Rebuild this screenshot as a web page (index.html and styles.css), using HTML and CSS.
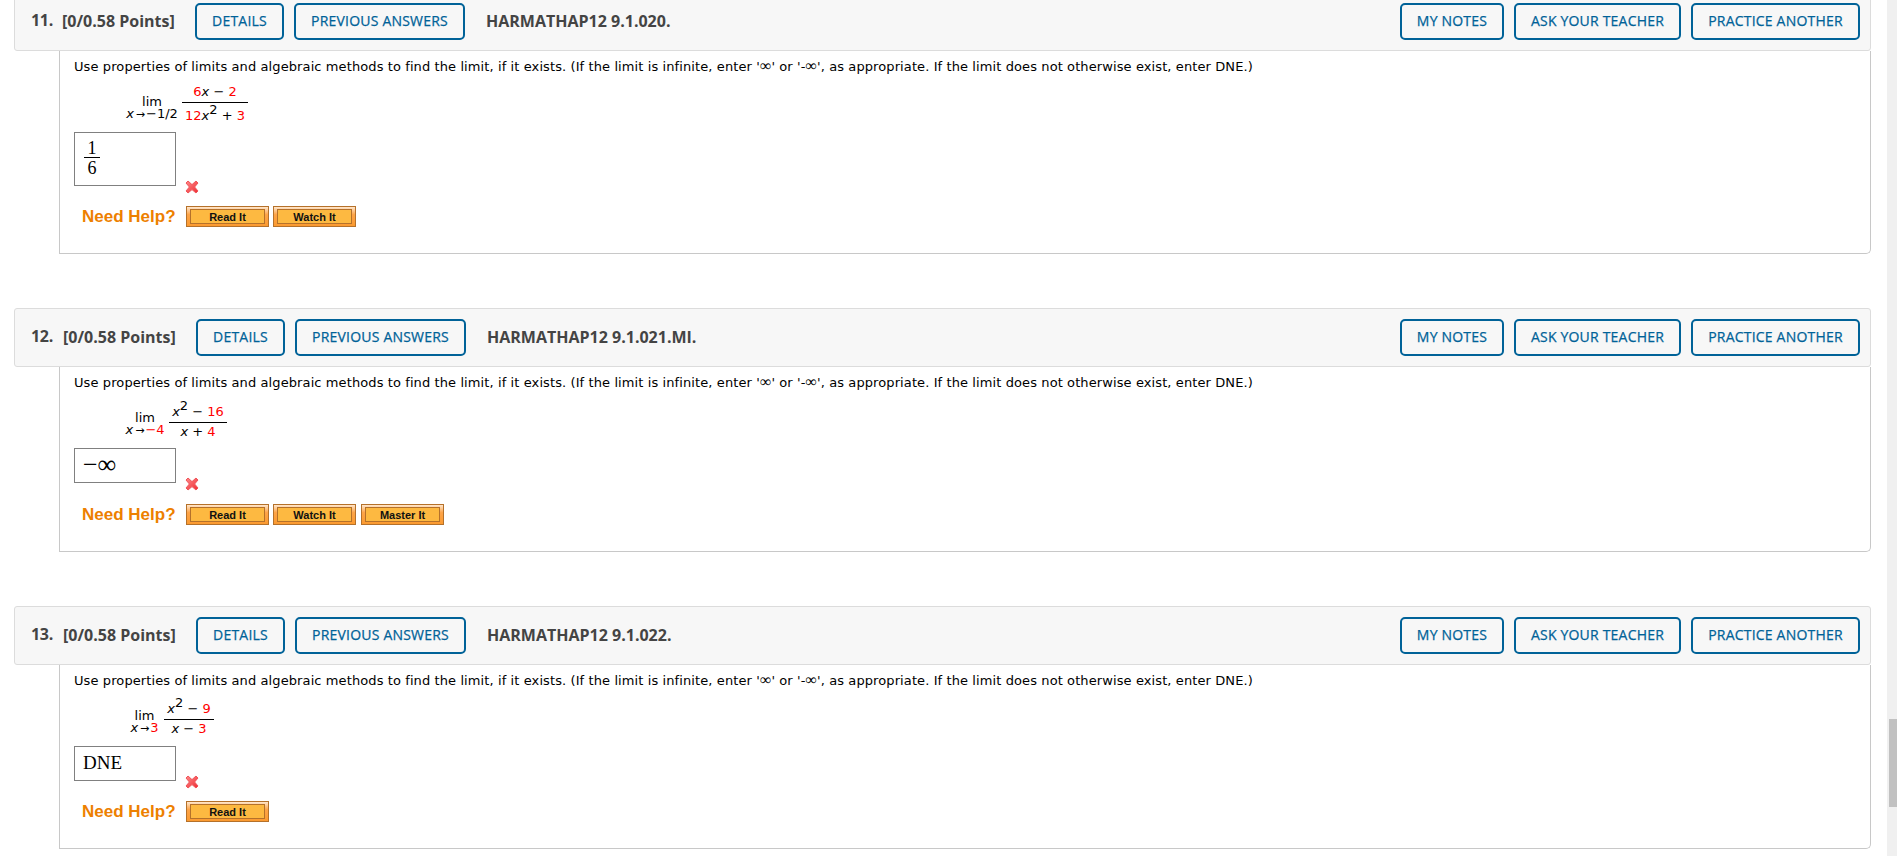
FILE: index.html
```
<!DOCTYPE html>
<html lang="en">
<head>
    <meta charset="UTF-8">
    <meta name="viewport" content="width=device-width, initial-scale=1.0">
    <title>Assignment</title>
    <link rel="stylesheet" href="styles.css">
</head>
<body>
    <svg width="0" height="0" class="defs">
        <defs>
            <linearGradient id="red" x1="0" y1="0" x2="1" y2="1">
                <stop offset="0" stop-color="#ff8a8a"/>
                <stop offset="1" stop-color="#ee2c33"/>
            </linearGradient>
            <symbol id="wrong" viewBox="0 0 14 14">
                <path d="M3 1 L7 4.6 L11 1 L13 3 L9.6 7 L13 11 L11 13 L7 9.6 L3 13 L1 11 L4.4 7 L1 3 Z" fill="url(#red)" stroke="#f0555a" stroke-width="1" stroke-linejoin="round"/>
            </symbol>
        </defs>
    </svg>
    <div class="page">
        <div class="question q11">
            <div class="header">
                <span class="num">11.</span>
                <span class="points">[0/0.58 Points]</span>
                <button class="btn details">DETAILS</button>
                <button class="btn previous">PREVIOUS ANSWERS</button>
                <span class="name">HARMATHAP12 9.1.020.</span>
                <button class="btn notes">MY NOTES</button>
                <button class="btn ask">ASK YOUR TEACHER</button>
                <button class="btn practice">PRACTICE ANOTHER</button>
            </div>
            <div class="content">
                <p class="prompt">Use properties of limits and algebraic methods to find the limit, if it exists. (If the limit is infinite, enter '<span class="inf">∞</span>' or '-<span class="inf">∞</span>', as appropriate. If the limit does not otherwise exist, enter DNE.)</p>
                <div class="limit">
                    <div class="lim"><span>lim</span><span class="to"><i>x</i><span class="arrow">→</span>−1/2</span></div>
                    <div class="fraction">
                        <span class="top"><b>6</b><i>x</i> − <b>2</b></span>
                        <span class="bottom"><b>12</b><i>x</i><sup>2</sup> + <b>3</b></span>
                    </div>
                </div>
                <div class="answer">
                    <div class="box tall"><span class="frac"><span>1</span><span>6</span></span></div>
                    <svg class="mark" width="14" height="14"><use href="#wrong"/></svg>
                </div>
                <div class="help">
                    <span class="need">Need Help?</span>
                    <button class="help-btn"><span>Read It</span></button>
                    <button class="help-btn"><span>Watch It</span></button>
                </div>
            </div>
        </div>

        <div class="question q12">
            <div class="header">
                <span class="num">12.</span>
                <span class="points">[0/0.58 Points]</span>
                <button class="btn details">DETAILS</button>
                <button class="btn previous">PREVIOUS ANSWERS</button>
                <span class="name">HARMATHAP12 9.1.021.MI.</span>
                <button class="btn notes">MY NOTES</button>
                <button class="btn ask">ASK YOUR TEACHER</button>
                <button class="btn practice">PRACTICE ANOTHER</button>
            </div>
            <div class="content">
                <p class="prompt">Use properties of limits and algebraic methods to find the limit, if it exists. (If the limit is infinite, enter '<span class="inf">∞</span>' or '-<span class="inf">∞</span>', as appropriate. If the limit does not otherwise exist, enter DNE.)</p>
                <div class="limit">
                    <div class="lim"><span>lim</span><span class="to"><i>x</i><span class="arrow">→</span><b>−4</b></span></div>
                    <div class="fraction">
                        <span class="top"><i>x</i><sup>2</sup> − <b>16</b></span>
                        <span class="bottom"><i>x</i> + <b>4</b></span>
                    </div>
                </div>
                <div class="answer">
                    <div class="box infinity">−∞</div>
                    <svg class="mark" width="14" height="14"><use href="#wrong"/></svg>
                </div>
                <div class="help">
                    <span class="need">Need Help?</span>
                    <button class="help-btn"><span>Read It</span></button>
                    <button class="help-btn"><span>Watch It</span></button>
                    <button class="help-btn last"><span>Master It</span></button>
                </div>
            </div>
        </div>

        <div class="question q13">
            <div class="header">
                <span class="num">13.</span>
                <span class="points">[0/0.58 Points]</span>
                <button class="btn details">DETAILS</button>
                <button class="btn previous">PREVIOUS ANSWERS</button>
                <span class="name">HARMATHAP12 9.1.022.</span>
                <button class="btn notes">MY NOTES</button>
                <button class="btn ask">ASK YOUR TEACHER</button>
                <button class="btn practice">PRACTICE ANOTHER</button>
            </div>
            <div class="content">
                <p class="prompt">Use properties of limits and algebraic methods to find the limit, if it exists. (If the limit is infinite, enter '<span class="inf">∞</span>' or '-<span class="inf">∞</span>', as appropriate. If the limit does not otherwise exist, enter DNE.)</p>
                <div class="limit">
                    <div class="lim"><span>lim</span><span class="to"><i>x</i><span class="arrow">→</span><b>3</b></span></div>
                    <div class="fraction">
                        <span class="top"><i>x</i><sup>2</sup> − <b>9</b></span>
                        <span class="bottom"><i>x</i> − <b>3</b></span>
                    </div>
                </div>
                <div class="answer">
                    <div class="box">DNE</div>
                    <svg class="mark" width="14" height="14"><use href="#wrong"/></svg>
                </div>
                <div class="help">
                    <span class="need">Need Help?</span>
                    <button class="help-btn"><span>Read It</span></button>
                </div>
            </div>
        </div>
    </div>
    <div class="scrollbar"><div class="thumb"></div></div>
</body>
</html>
```
FILE: styles.css
```
* {
    box-sizing: border-box;
}
body {
    margin: 0;
    height: 856px;
    overflow: hidden;
    display: flex;
    background-color: #fff;
    font-family: "DejaVu Sans", Verdana, sans-serif;
    font-size: 13px;
    color: #000;
}
.defs {
    position: absolute;
}
.page {
    width: 1887px;
    padding: 0 16px 0 14px;
    margin-top: -8px;
}
.question {
    margin-bottom: 54px;
}
.header {
    height: 59px;
    display: flex;
    align-items: flex-start;
    padding: 10px 10px 0 16px;
    border: 1px solid #dcdcdc;
    border-radius: 3px;
    background-color: #f7f7f7;
    font-family: "Open Sans", sans-serif;
    color: #444;
    white-space: nowrap;
}
.num,
.points,
.name {
    font-size: 16px;
    font-weight: 700;
    line-height: 36px;
}
.num {
    width: 32px;
    line-height: 35px;
    letter-spacing: -0.3px;
}
.points {
    width: 133px;
}
.q11 .num {
    width: 31px;
}
.name {
    margin-left: 11px;
    margin-right: auto;
}
.btn {
    height: 37px;
    padding: 0 0 2px;
    margin-right: 10px;
    border: 2px solid #006298;
    border-radius: 5px;
    background: none;
    color: #006298;
    font-family: "Open Sans", sans-serif;
    font-size: 14px;
    font-weight: 500;
    letter-spacing: 0.2px;
    -webkit-text-stroke: 0.25px #006298;
}
.details {
    width: 89px;
}
.previous {
    width: 171px;
}
.notes {
    width: 104px;
}
.ask {
    width: 167px;
}
.practice {
    width: 169px;
    margin-right: 0;
}
.content {
    margin-left: 45px;
    height: 203px;
    padding: 8px 14px 0;
    border: 1px solid #c8c8c8;
    border-top: none;
    border-radius: 0 0 5px 0;
}
.q12 .content {
    height: 185px;
}
.q13 .content {
    height: 184px;
}
.prompt {
    margin: 0;
    height: 18px;
    line-height: 15px;
    font-size: 13px;
    letter-spacing: 0.1px;
    white-space: nowrap;
}
.inf {
    font-family: "Liberation Serif", serif;
    font-size: 16px;
    line-height: 0;
}
.limit {
    height: 55px;
    display: flex;
    align-items: flex-start;
    margin-left: 51px;
    white-space: nowrap;
}
.limit b {
    font-weight: normal;
    color: #f00;
}
.lim {
    width: 54px;
    display: flex;
    flex-direction: column;
    align-items: center;
    padding-top: 19px;
    margin-right: 3px;
    line-height: 12px;
}
.fraction {
    width: 66px;
    display: flex;
    flex-direction: column;
    margin-top: 8px;
    text-align: center;
}
.fraction span {
    height: 17px;
    line-height: 13px;
}
.fraction .bottom {
    height: 20px;
    padding-top: 6px;
    border-top: 1px solid #000;
}
.fraction sup {
    font-size: 13px;
    line-height: 0;
    vertical-align: 6px;
}
.arrow {
    font-size: 11px;
    margin: 0 1px 0 2px;
}
.q12 .lim {
    width: 40px;
    margin-right: 4px;
}
.q12 .fraction {
    width: 58px;
    margin-top: 12px;
}
.q12 .bottom,
.q13 .bottom {
    padding-top: 2px;
}
.q13 .limit {
    margin-left: 55px;
}
.q13 .lim {
    width: 31px;
    margin-right: 4px;
}
.q13 .fraction {
    width: 50px;
    margin-top: 11px;
}
.answer {
    display: flex;
    align-items: flex-end;
}
.box {
    width: 102px;
    height: 35px;
    padding-left: 8px;
    border: 1px solid #808080;
    font-family: "Liberation Serif", serif;
    font-size: 19px;
    line-height: 32px;
}
.infinity {
    font-size: 26px;
    letter-spacing: -0.2px;
}
.tall {
    height: 54px;
    padding: 7px 9px;
}
.frac {
    width: 16px;
    display: flex;
    flex-direction: column;
    text-align: center;
    font-size: 18px;
    line-height: 17px;
}
.frac span:first-child {
    height: 18px;
    border-bottom: 1px solid #000;
}
.frac span:last-child {
    padding-top: 2px;
}
.mark {
    margin: 0 0 -8px 9px;
}
.help {
    display: flex;
    align-items: center;
    height: 21px;
    margin-top: 20px;
    padding-left: 8px;
}
.q12 .help {
    margin-top: 21px;
}
.need {
    width: 104px;
    font-family: "Liberation Sans", Arial, sans-serif;
    font-size: 17px;
    font-weight: bold;
    color: #ed8000;
    line-height: 20px;
    white-space: nowrap;
}
.help-btn {
    width: 83px;
    height: 21px;
    padding: 2px 3px;
    margin-right: 4px;
    border: 1px solid #b5712a;
    background: linear-gradient(#ffe6cc, #fda448 40%, #fb9a30);
    font-family: "Liberation Sans", Arial, sans-serif;
    font-size: 11px;
    font-weight: bold;
    color: #111;
}
.help-btn span {
    display: block;
    height: 15px;
    border: 1px solid #b5712a;
    background-color: #fdb941;
    line-height: 15px;
}
.last {
    margin-left: 1px;
}
.scrollbar {
    width: 10px;
    height: 856px;
    padding: 719px 0 0 2px;
    background-color: #f0f0f0;
}
.thumb {
    height: 88px;
    background-color: #c1c1c1;
}
```
